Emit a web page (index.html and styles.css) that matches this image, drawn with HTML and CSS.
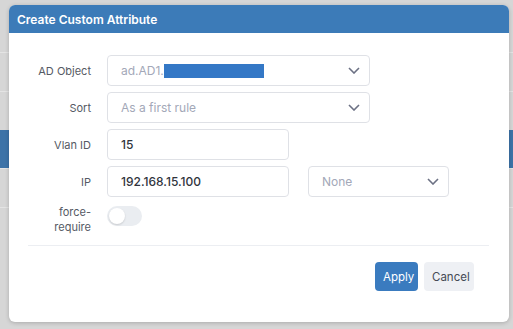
FILE: index.html
```html
<!DOCTYPE html>
<html lang="en">
<head>
    <meta charset="UTF-8">
    <meta name="viewport" content="width=device-width, initial-scale=1.0">
    <title>Create Custom Attribute</title>
    <link rel="stylesheet" href="styles.css">
</head>
<body>

    <!-- page behind the dialog -->
    <div class="page">
        <div class="page-row"></div>
        <div class="page-row"></div>
        <div class="page-row active"></div>
        <div class="page-row"></div>
        <div class="page-row"></div>
    </div>

    <div class="modal">
        <div class="modal-header">Create Custom Attribute</div>

        <div class="modal-body">
            <div class="form-row">
                <label>AD Object</label>
                <div class="field select wide">
                    <span class="placeholder">ad.AD1.<span class="redact"></span></span>
                    <svg class="chevron" viewBox="0 0 12 7"><path d="M1 1l5 5 5-5"/></svg>
                </div>
            </div>

            <div class="form-row">
                <label>Sort</label>
                <div class="field select wide">
                    <span class="placeholder">As a first rule</span>
                    <svg class="chevron" viewBox="0 0 12 7"><path d="M1 1l5 5 5-5"/></svg>
                </div>
            </div>

            <div class="form-row">
                <label>Vlan ID</label>
                <div class="field short"><span class="value">15</span></div>
            </div>

            <div class="form-row">
                <label>IP</label>
                <div class="ip-group">
                    <div class="field short"><span class="value">192.168.15.100</span></div>
                    <div class="field select mask">
                        <span class="placeholder">None</span>
                        <svg class="chevron" viewBox="0 0 12 7"><path d="M1 1l5 5 5-5"/></svg>
                    </div>
                </div>
            </div>

            <div class="form-row toggle-row">
                <label>force-<br>require</label>
                <div class="toggle"><span class="knob"></span></div>
            </div>
        </div>

        <div class="modal-footer">
            <button class="btn btn-primary">Apply</button>
            <button class="btn btn-light">Cancel</button>
        </div>
    </div>

</body>
</html>
```

FILE: styles.css
```css
body {
    margin: 0;
    font-family: Inter, "Open Sans", sans-serif;
    background-color: #d6d6d6;
    height: 329px;
    overflow: hidden;
}

.page {
    padding-top: 52px;
}

.page-row {
    height: 38px;
    border-top: 1px solid #e4e4e4;
}

.page-row.active {
    background-color: #3d73a8;
    border-top: none;
}

.modal {
    position: absolute;
    top: 5px;
    left: 9px;
    width: 500px;
    height: 317px;
    background: white;
    border-radius: 6px;
    overflow: hidden;
    box-shadow: 0 1px 4px rgba(0, 0, 0, 0.2);
}

.modal-header {
    height: 28px;
    background-color: #3c7bb8;
    color: white;
    font-size: 12px;
    font-weight: 600;
    line-height: 29px;
    padding-left: 8px;
}

.modal-body {
    padding: 22px 20px 0 20px;
    display: flex;
    flex-direction: column;
    gap: 6px;
}

.form-row {
    display: grid;
    grid-template-columns: 62px 1fr;
    column-gap: 16px;
    align-items: center;
}

.form-row label {
    text-align: right;
    font-size: 11px;
    color: #555a64;
}

.field {
    height: 29px;
    border: 1px solid #dfe1e6;
    border-radius: 4px;
    display: flex;
    align-items: center;
    padding: 0 13px;
    font-size: 12px;
}

.wide {
    width: 235px;
}

.short {
    width: 154px;
}

.mask {
    width: 113px;
}

.select {
    justify-content: space-between;
}

.ip-group {
    display: flex;
    gap: 19px;
}

.placeholder {
    color: #a3a8b8;
    display: flex;
    align-items: center;
}

.value {
    color: #30343c;
    font-weight: 500;
}

.redact {
    display: inline-block;
    width: 100px;
    height: 14px;
    background-color: #3478c6;
}

.chevron {
    width: 12px;
    height: 7px;
    fill: none;
    stroke: #6c7184;
    stroke-width: 1.6;
    margin-right: -4px;
}

.toggle-row {
    margin-top: 2px;
    align-items: start;
}

.toggle-row label {
    line-height: 15px;
}

.toggle {
    width: 35px;
    height: 20px;
    border-radius: 10px;
    background-color: #eaedf1;
    margin-top: 1px;
    position: relative;
}

.knob {
    position: absolute;
    top: 2px;
    left: 2px;
    width: 16px;
    height: 16px;
    border-radius: 50%;
    background: white;
    box-shadow: 0 1px 2px rgba(0, 0, 0, 0.15);
}

.modal-footer {
    margin: 10px 20px 0 19px;
    border-top: 1px solid #eceef2;
    padding: 16px 15px 0 0;
    display: flex;
    justify-content: flex-end;
    gap: 6px;
}

.btn {
    height: 29px;
    border: none;
    border-radius: 4px;
    font-family: inherit;
    font-size: 11.5px;
    padding: 0 8px;
    cursor: pointer;
}

.btn-primary {
    background-color: #3a7bbf;
    color: white;
    width: 43px;
}

.btn-light {
    background-color: #eef0f4;
    color: #454a55;
    width: 50px;
}
```
